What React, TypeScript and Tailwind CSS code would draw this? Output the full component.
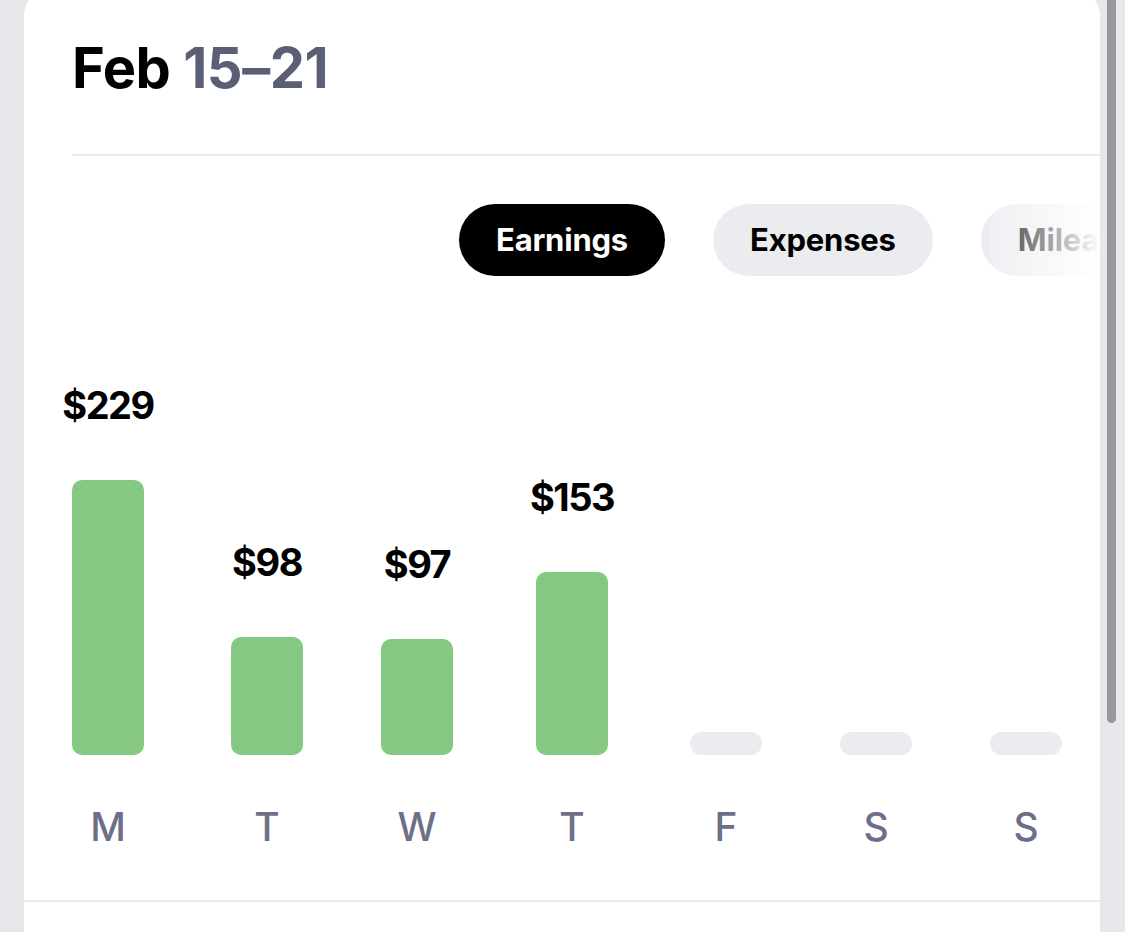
const DAYS = [
  { day: 'M', value: '$229', height: 275, gap: '' },
  { day: 'T', value: '$98', height: 118, gap: 'ml-[87px]' },
  { day: 'W', value: '$97', height: 116, gap: 'ml-[78px]' },
  { day: 'T', value: '$153', height: 183, gap: 'ml-[83px]' },
  { day: 'F', value: null, height: 23, gap: 'ml-[82px]' },
  { day: 'S', value: null, height: 23, gap: 'ml-[78px]' },
  { day: 'S', value: null, height: 23, gap: 'ml-[78px]' },
]

const FONT = "font-['Inter','Noto_Sans',sans-serif]"

function Pill({ label, active }: { label: string; active?: boolean }) {
  return (
    <div
      className={
        'h-[72px] px-[37px] rounded-full flex items-center shrink-0 text-[31px] font-bold tracking-[-0.2px] ' +
        (active ? 'bg-black text-white' : 'bg-[#ebecf0] text-black')
      }
    >
      {label}
    </div>
  )
}

function Column({ value, height, gap }: (typeof DAYS)[number]) {
  const empty = value === null
  return (
    <div className={'w-[72px] shrink-0 flex flex-col items-center ' + gap}>
      {value && (
        <div className="text-[38px] leading-none font-bold tracking-[-1.5px] text-black whitespace-nowrap mb-[56px]">
          {value}
        </div>
      )}
      <div
        className={'w-[72px] ' + (empty ? 'bg-[#ebecf0] rounded-full' : 'bg-[#84c882] rounded-[10px]')}
        style={{ height }}
      />
    </div>
  )
}

export default function App() {
  return (
    <div className={'w-full h-[932px] bg-[#e6e7eb] flex overflow-hidden ' + FONT}>
      <div className="flex-1 pl-6 min-w-0 h-[932px] overflow-hidden">
        <div className="bg-white rounded-t-[28px] -mt-3 h-[1100px]">
          {/* Header */}
          <div className="pt-[52px] pl-12">
            <h1 className="text-[56px] leading-none h-[56px] font-bold tracking-[-0.5px] text-black">
              Feb <span className="text-[#5b5f75]">15–21</span>
            </h1>
          </div>
          <div className="ml-12 mt-[58px] h-[2px] bg-[#ececef]" />

          {/* Tabs */}
          <div className="relative mt-[48px] overflow-hidden">
            <div className="flex gap-12 pl-[435px]">
              <Pill label="Earnings" active />
              <Pill label="Expenses" />
              <Pill label="Mileage" />
            </div>
            <div className="absolute right-0 top-0 h-full w-[110px] bg-gradient-to-r from-white/20 via-white/60 to-white" />
          </div>

          {/* Chart */}
          <div className="h-[479px] flex items-end pl-12">
            {DAYS.map((d, i) => (
              <Column key={i} {...d} />
            ))}
          </div>
          <div className="flex pl-12 mt-[52px]">
            {DAYS.map((d, i) => (
              <div key={i} className={'w-[72px] shrink-0 text-center text-[39px] leading-none font-medium text-[#6c6f87] ' + d.gap}>
                {d.day}
              </div>
            ))}
          </div>
          <div className="mt-[54px] h-[2px] bg-[#ececef]" />
        </div>
      </div>

      {/* Scrollbar */}
      <div className="w-[25px] shrink-0 bg-[#e8e8ec]">
        <div className="ml-[7px] w-[9px] h-[723px] rounded-b-full bg-[#98989c]" />
      </div>
    </div>
  )
}
